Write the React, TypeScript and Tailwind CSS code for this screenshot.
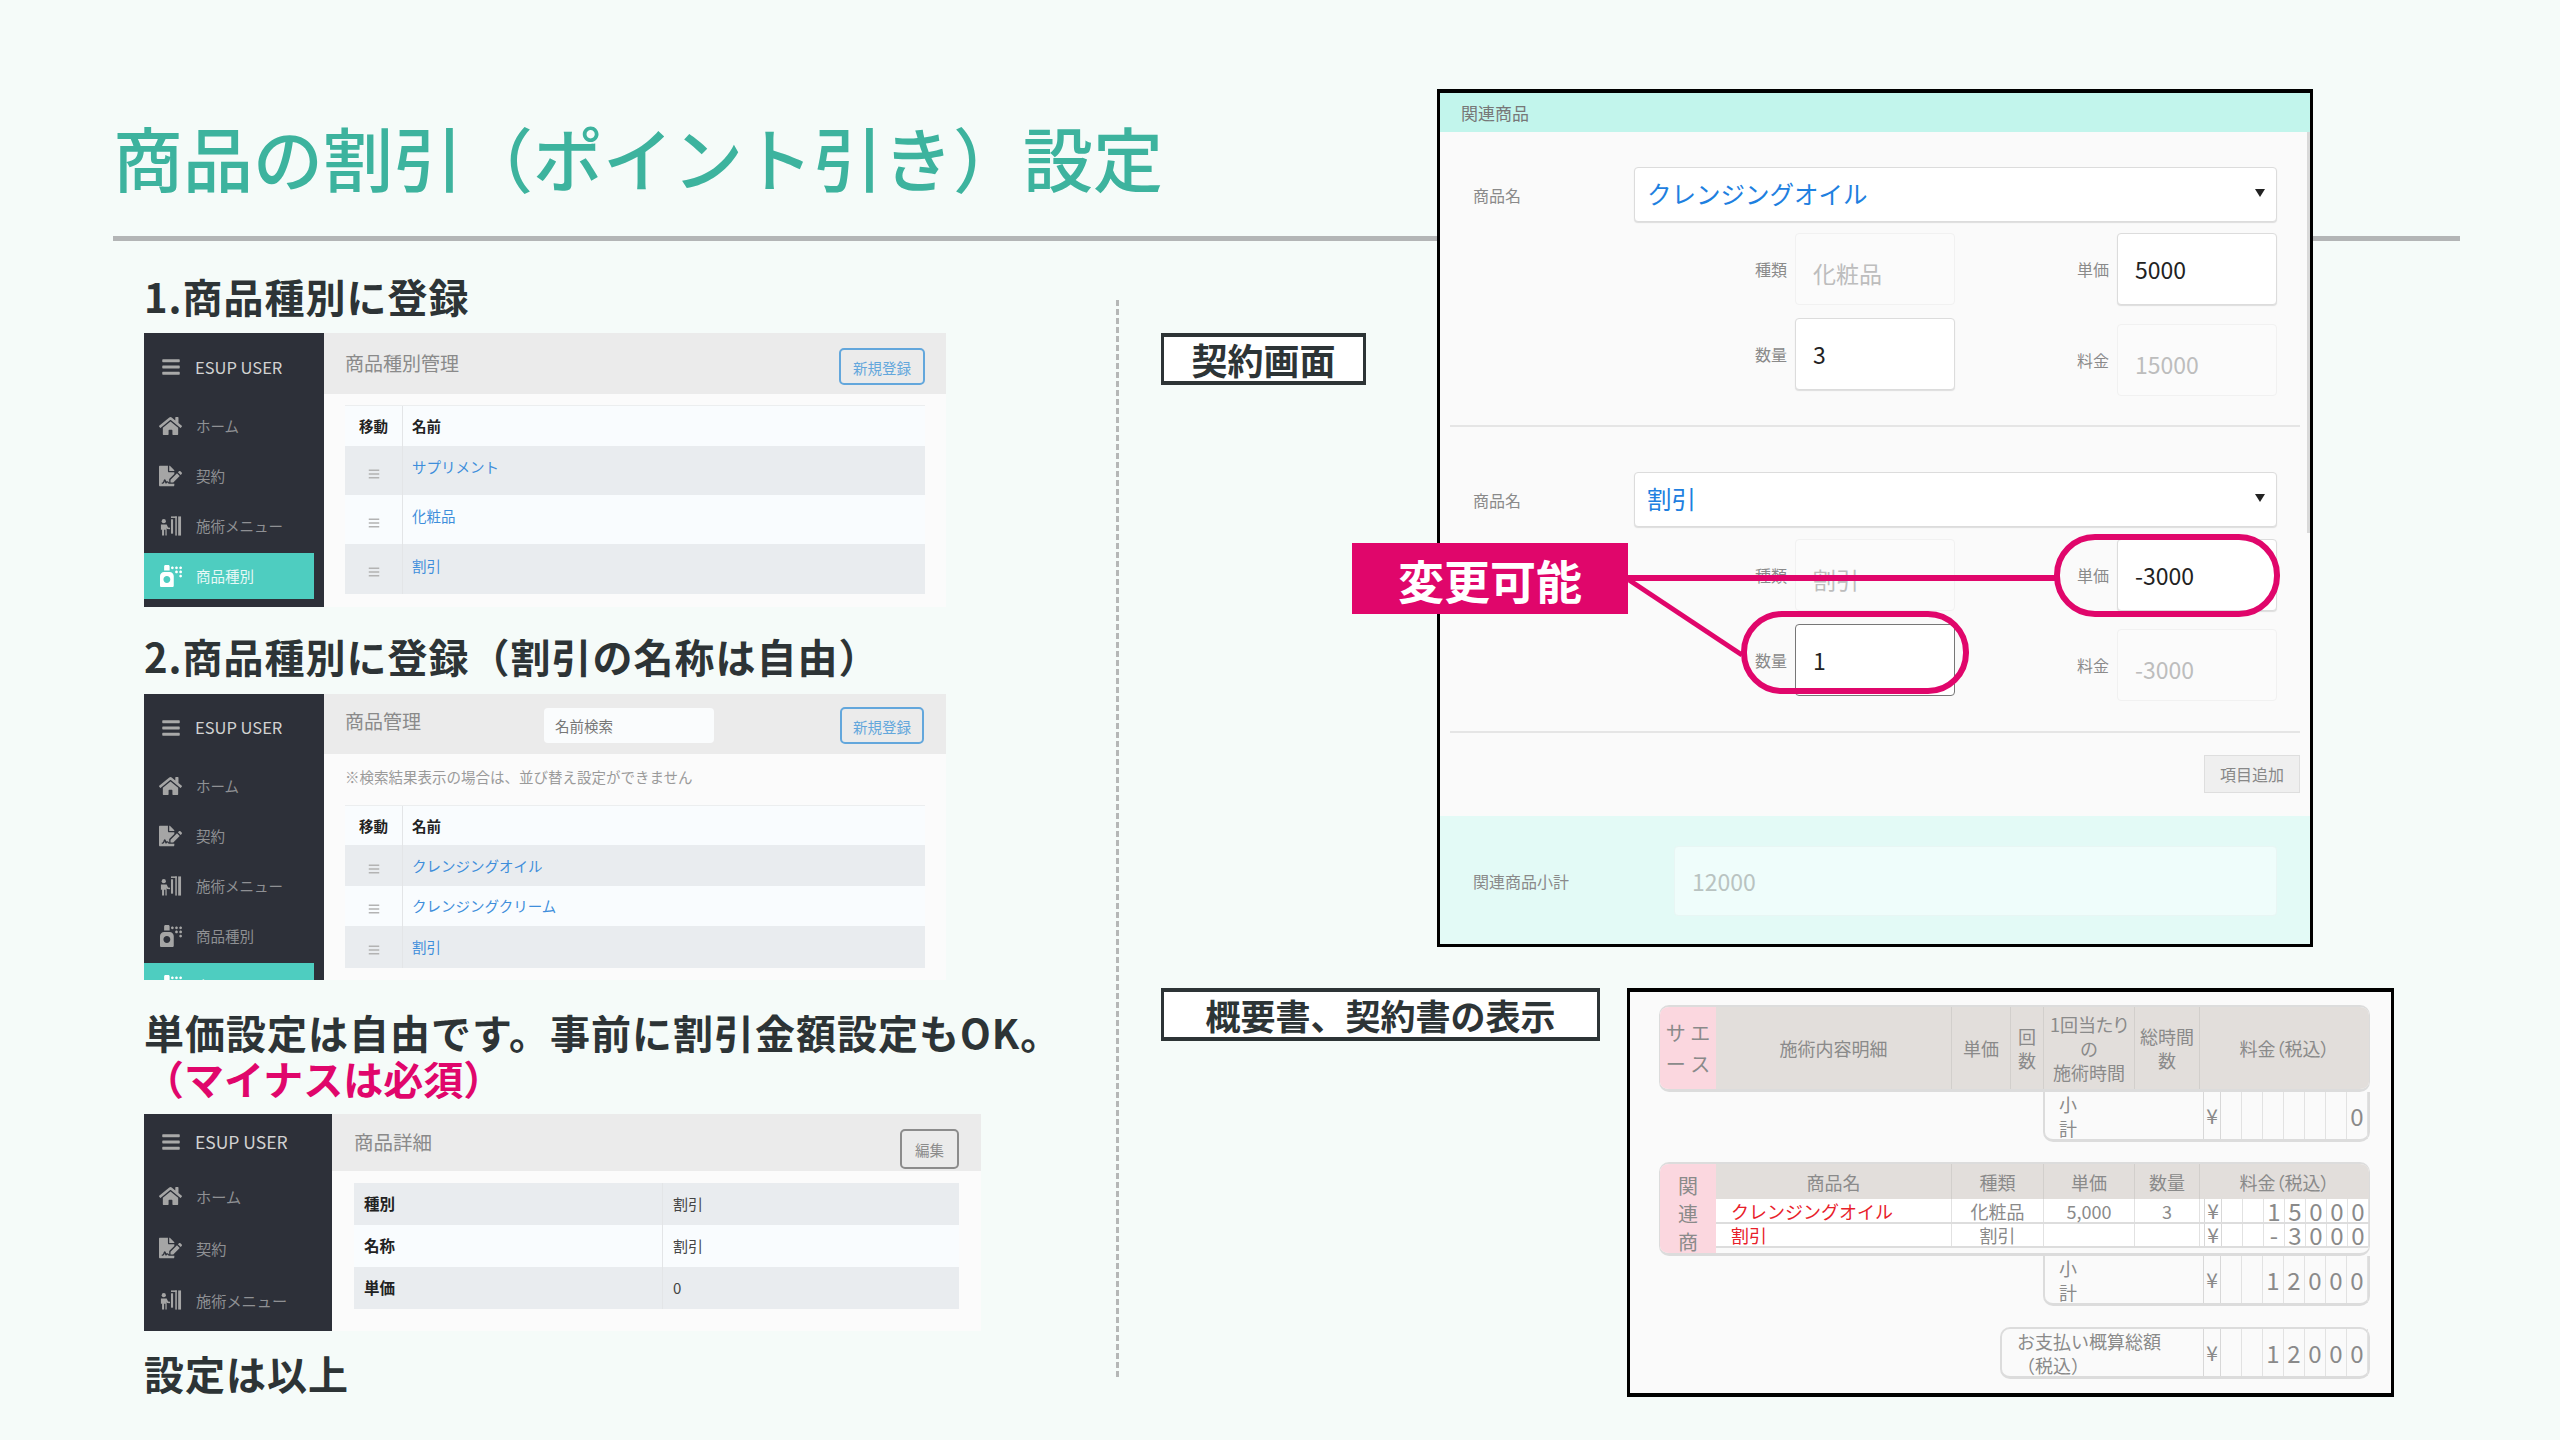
import React from "react";
import { FaHome, FaFileSignature, FaSprayCan, FaBars } from "react-icons/fa";

const MenuIcon = ({ className }: { className?: string }) => (
  <svg viewBox="0 0 24 24" className={className} fill="currentColor">
    <circle cx="5" cy="7" r="2.2" />
    <path d="M2 10.5h6l1.5 3 2 .2v1.6l-3-.2-.5-.9V22H6.7v-6H5.3v6H3.2v-6.5L2 16.5z" />
    <rect x="12.5" y="5" width="2.2" height="15" />
    <rect x="17" y="2" width="1.6" height="20" />
    <rect x="20" y="2" width="3" height="20" />
    <rect x="12.5" y="2" width="6" height="1.6" />
  </svg>
);

type SideProps = {
  width: string;
  activeInner: string;
  headCls: string;
  itemCls: string;
  textCls: string;
  brandCls: string;
  items: { label: string; icon: React.ReactNode; active?: boolean }[];
};

const Sidebar = ({ width, headCls, itemCls, textCls, brandCls, activeInner, items }: SideProps) => (
  <div className={`${width} shrink-0 bg-[#2d3039] overflow-hidden`}>
    <div className={`${headCls} flex items-center pl-[17px] gap-[14px]`}>
      <FaBars className="w-[20px] h-[20px] text-[#a9a9a9]" />
      <span className={`${brandCls} text-[#d2d2d2]`}>ESUP USER</span>
    </div>
    {items.map((it) => (
      <div key={it.label} className={`${itemCls} flex items-center`}>
        <div
          className={
            it.active
              ? `${activeInner} flex items-center bg-[#4ecdc0] pl-[15px] gap-[14px] h-[46px] text-white`
              : "flex items-center pl-[15px] gap-[14px] text-[#a5a5a5]"
          }
        >
          <span className="w-[23px] h-[23px] flex items-center justify-center shrink-0">{it.icon}</span>
          <span className={`${textCls} ${it.active ? "text-[#e8f8f6]" : "text-[#8f9094]"}`}>{it.label}</span>
        </div>
      </div>
    ))}
  </div>
);

const nav = (active: boolean) => [
  { label: "ホーム", icon: <FaHome className="w-[24px] h-[24px]" /> },
  { label: "契約", icon: <FaFileSignature className="w-[24px] h-[24px]" /> },
  { label: "施術メニュー", icon: <MenuIcon className="w-[24px] h-[24px]" /> },
  { label: "商品種別", icon: <FaSprayCan className="w-[22px] h-[22px]" />, active },
];

const OutlineBtn = ({ children, cls }: { children: React.ReactNode; cls: string }) => (
  <div className={`${cls} flex items-center justify-center rounded-[5px] border-2 text-[14.5px] leading-none pt-[3px]`}>
    {children}
  </div>
);

const Row = ({ name, odd, h, up }: { name: string; odd: boolean; h: string; up: string }) => (
  <div className={`flex ${h} ${odd ? "bg-[#e9ecef]" : "bg-[#f9fcfe]"}`}>
    <div className="w-[58px] shrink-0 flex items-center justify-center border-r border-[#e3e5e7] pt-[6px]">
      <FaBars className="w-[12px] h-[12px] text-[#b3b3b3]" />
    </div>
    <div className={`flex items-center pl-[9px] text-[14.5px] text-[#3e8edb] ${up}`}>{name}</div>
  </div>
);

const TableHead = ({ h }: { h: string }) => (
  <div className={`flex ${h} bg-[#f9fcfe] text-[14.5px] font-bold text-[#222] border-t border-[#eceeef]`}>
    <div className="w-[58px] shrink-0 flex items-center justify-center border-r border-[#e3e5e7]">移動</div>
    <div className="flex items-center pl-[9px]">名前</div>
  </div>
);

const Heading = ({ children, cls }: { children: React.ReactNode; cls: string }) => (
  <div className={`${cls} h-[48px] flex items-center text-[40px] leading-none font-bold tracking-[1px] text-[#2d3436]`}>
    {children}
  </div>
);

const ShotOne = () => (
  <div className="flex w-[802px] h-[274px] mt-[13px]">
    <Sidebar
      width="w-[180px]"
      headCls="h-[68px]"
      itemCls="h-[50px]"
      activeInner="w-[170px]"
      textCls="text-[14.5px]"
      brandCls="text-[16.5px]"
      items={nav(true)}
    />
    <div className="flex-1 bg-[#fbfbfb]">
      <div className="h-[61px] bg-[#ebebeb] flex items-center justify-between pl-[21px] pr-[21px]">
        <span className="text-[19px] text-[#8a8a8a]">商品種別管理</span>
        <OutlineBtn cls="w-[86px] h-[37px] mt-[6px] border-[#63a7dc] text-[#63a7dc]">新規登録</OutlineBtn>
      </div>
      <div className="mx-[21px] mt-[11px]">
        <TableHead h="h-[41px]" />
        <Row name="サプリメント" odd h="h-[49px]" up="pb-[7px]" />
        <Row name="化粧品" odd={false} h="h-[49px]" up="pb-[7px]" />
        <Row name="割引" odd h="h-[50px]" up="pb-[7px]" />
      </div>
    </div>
  </div>
);

const ShotTwo = () => (
  <div className="flex w-[802px] h-[286px] mt-[14px] overflow-hidden">
    <Sidebar
      width="w-[180px]"
      headCls="h-[67px]"
      itemCls="h-[50px]"
      activeInner="w-[170px]"
      textCls="text-[14.5px]"
      brandCls="text-[16.5px]"
      items={[
        ...nav(false),
        { label: "商品", icon: <FaSprayCan className="w-[22px] h-[22px]" />, active: true },
      ]}
    />
    <div className="flex-1 bg-[#fbfbfb]">
      <div className="h-[60px] bg-[#ebebeb] flex items-center pl-[21px] pr-[22px]">
        <span className="w-[199px] text-[19px] text-[#8a8a8a] pb-[6px]">商品管理</span>
        <div className="w-[170px] h-[35px] mt-[3px] bg-[#fafcfd] rounded-[4px] flex items-center pl-[11px] text-[14.5px] text-[#777]">
          名前検索
        </div>
        <OutlineBtn cls="ml-auto w-[84px] h-[37px] mt-[3px] border-[#63a7dc] text-[#63a7dc]">新規登録</OutlineBtn>
      </div>
      <div className="pl-[21px] h-[46px] flex items-center text-[14.5px] text-[#9a9a9a]">
        ※検索結果表示の場合は、並び替え設定ができません
      </div>
      <div className="mx-[21px] mt-[5px]">
        <TableHead h="h-[40px]" />
        <Row name="クレンジングオイル" odd h="h-[41px]" up="" />
        <Row name="クレンジングクリーム" odd={false} h="h-[40px]" up="" />
        <Row name="割引" odd h="h-[42px]" up="" />
      </div>
    </div>
  </div>
);

const DetailRow = ({ k, v, odd }: { k: string; v: string; odd: boolean }) => (
  <div className={`flex h-[42px] ${odd ? "bg-[#e9ecef]" : "bg-[#f9fcfe]"}`}>
    <div className="w-[309px] flex items-center pl-[10px] font-bold text-[15.5px] text-[#222] border-r border-[#e3e5e7]">{k}</div>
    <div className="flex items-center pl-[10px] text-[15px] text-[#444]">{v}</div>
  </div>
);

const ShotThree = () => (
  <div className="flex w-[837px] h-[217px] mt-[14px] overflow-hidden">
    <Sidebar
      width="w-[188px]"
      headCls="h-[56px]"
      itemCls="h-[52px] first-of-type:mt-[9px]"
      activeInner="w-[170px]"
      textCls="text-[15.2px]"
      brandCls="text-[17.5px]"
      items={nav(false).slice(0, 3)}
    />
    <div className="flex-1 bg-[#fbfbfb]">
      <div className="h-[57px] bg-[#ebebeb] flex items-center justify-between pl-[22px] pr-[22px]">
        <span className="text-[19.5px] text-[#8a8a8a] pb-[2px]">商品詳細</span>
        <OutlineBtn cls="w-[59px] h-[40px] mt-[12px] border-[#8c8c8c] text-[#8c8c8c]">編集</OutlineBtn>
      </div>
      <div className="mx-[22px] mt-[12px]">
        <DetailRow k="種別" v="割引" odd />
        <DetailRow k="名称" v="割引" odd={false} />
        <DetailRow k="単価" v="0" odd />
      </div>
    </div>
  </div>
);

const Field = ({
  label,
  value,
  editable,
  focused,
  cls,
}: {
  label: string;
  value: string;
  editable?: boolean;
  focused?: boolean;
  cls: string;
}) => (
  <div className={`flex items-center gap-[8px] ${cls}`}>
    <span className="w-[32px] text-[16px] leading-none text-[#8a8a8a] whitespace-nowrap">{label}</span>
    <div
      className={`w-[160px] h-[72px] rounded-[4px] flex items-center pl-[17px] text-[23px] border ${
        editable
          ? `bg-white text-[#222] ${focused ? "border-[#777]" : "border-[#dcdcdc] shadow-[0_1px_1px_#ddd]"}`
          : "bg-[#fbfbfb] text-[#bdbdbd] border-[#f1f1f1] pt-[8px]"
      }`}
    >
      {value}
    </div>
  </div>
);

const SelectRow = ({ value, cls }: { value: string; cls: string }) => (
  <div className={`flex items-center pl-[33px] pr-[33px] ${cls}`}>
    <span className="w-[161px] text-[16px] text-[#8a8a8a]">商品名</span>
    <div className="flex-1 h-[55px] bg-white rounded-[4px] border border-[#dcdcdc] shadow-[0_1px_1px_#ddd] flex items-center justify-between pl-[12px] pr-[11px]">
      <span className="text-[24.5px] text-[#1e80e0]">{value}</span>
      <svg viewBox="0 0 10 8" className="w-[10px] h-[8px] mb-[3px]" fill="#222">
        <polygon points="0,0 10,0 5,8" />
      </svg>
    </div>
  </div>
);

const Separator = ({ cls }: { cls: string }) => <div className={`${cls} mx-[10px] h-[2px] bg-[#e5e5e5]`} />;

const ContractPanel = () => (
  <div className="relative w-[876px] h-[858px] shrink-0">
    <div className="relative w-full h-full border-[3px] border-black border-t-[4px] bg-[#fafafa] overflow-hidden">
      <div className="h-[39px] bg-[#c2f5ec] flex items-center pl-[21px] text-[17px] text-[#777]">関連商品</div>
      <div className="absolute right-0 top-[39px] w-[3px] h-[401px] bg-[#d9d9d9]" />
      <SelectRow value="クレンジングオイル" cls="pt-[35px]" />
      <div className="flex justify-end gap-[122px] pr-[33px] mt-[11px]">
        <Field label="種類" value="化粧品" cls="" />
        <Field label="単価" value="5000" editable cls="" />
      </div>
      <div className="flex justify-end gap-[122px] pr-[33px] mt-[13px] h-[78px]">
        <Field label="数量" value="3" editable cls="self-start" />
        <Field label="料金" value="15000" cls="self-end" />
      </div>
      <Separator cls="mt-[29px]" />
      <SelectRow value="割引" cls="mt-[45px]" />
      <div className="flex justify-end gap-[122px] pr-[33px] mt-[12px]">
        <Field label="種類" value="割引" cls="" />
        <Field label="単価" value="-3000" editable cls="" />
      </div>
      <div className="flex justify-end gap-[122px] pr-[33px] mt-[13px] h-[77px]">
        <Field label="数量" value="1" editable focused cls="self-start" />
        <Field label="料金" value="-3000" cls="self-end" />
      </div>
      <Separator cls="mt-[30px]" />
      <div className="flex justify-end mr-[10px] mt-[22px] h-[61px]">
        <div className="w-[96px] h-[38px] bg-[#efefef] border border-[#dedede] flex items-center justify-center text-[16px] text-[#888]">
          項目追加
        </div>
      </div>
      <div className="h-[130px] bg-[#e3faf6] flex items-center pl-[33px] pr-[33px]">
        <span className="w-[201px] text-[16px] text-[#8a8a8a]">関連商品小計</span>
        <div className="flex-1 h-[70px] bg-[#effdfb] border border-[#e8f6f4] rounded-[4px] flex items-center pl-[17px] text-[23px] text-[#b9c3c1]">
          12000
        </div>
      </div>
    </div>
    <svg className="absolute left-0 top-0 w-full h-full overflow-visible pointer-events-none" fill="none" stroke="#e0066b">
      <line x1="191" y1="489" x2="620" y2="489" strokeWidth="6" />
      <line x1="192" y1="491" x2="305" y2="566" strokeWidth="5" />
      <rect x="620" y="448" width="220" height="77" rx="38" strokeWidth="6" />
      <rect x="307" y="525" width="222" height="77" rx="38" strokeWidth="6" />
    </svg>
    <div className="absolute left-[-85px] top-[454px] w-[276px] h-[71px] bg-[#e0066b] flex items-center justify-center text-white text-[46px] leading-none font-bold">
      変更可能
    </div>
  </div>
);

const LabelBox = ({ children, cls }: { children: React.ReactNode; cls: string }) => (
  <div className={`${cls} shrink-0 bg-white border-[3px] border-t-[4px] border-b-[4px] border-[#2d3436] flex items-center justify-center font-bold leading-none text-[#2d3436]`}>
    {children}
  </div>
);

const Digits = ({ cells, big }: { cells: string[]; big?: boolean }) => (
  <div className="flex h-full pl-[4px] text-[#8a8a8a]">
    <div className="w-[18px] flex items-center justify-center text-[21px] border-x border-[#d8d8d8]">¥</div>
    {cells.map((c, i) => (
      <div
        key={i}
        className={`w-[21px] flex items-center justify-center border-r border-[#e2e2e2] ${big ? "text-[24px]" : "text-[22px]"}`}
      >
        {c}
      </div>
    ))}
  </div>
);

const HeadCell = ({ w, children }: { w: string; children: React.ReactNode }) => (
  <div className={`${w} h-full flex items-center justify-center text-center text-[18px] leading-[24px] text-[#8a8a8a] border-r border-[#d2cfcc] [font-feature-settings:'palt'] last:border-r-0`}>
    <span>{children}</span>
  </div>
);

const BodyCell = ({ w, children, red }: { w: string; children?: React.ReactNode; red?: boolean }) => (
  <div
    className={`${w} flex items-center text-[18px] leading-none ${
      red ? "justify-start pl-[15px] text-[#e8202a]" : "justify-center text-[#8a8a8a]"
    } border-r border-[#e2e2e2]`}
  >
    {children}
  </div>
);

const Sub = () => (
  <div className="w-[327px] h-[50px] ml-auto flex border-x-2 border-b-[3px] border-[#dcdcdc] rounded-b-[10px]">
    <div className="w-[154px] pl-[14px] text-[18px] leading-[24px] text-[#8a8a8a] flex items-center">
      <span>小<br />計</span>
    </div>
  </div>
);

const SubTotal = ({ cells }: { cells: string[] }) => (
  <div className="w-[327px] h-[50px] ml-auto flex border-x-2 border-b-[3px] border-[#dcdcdc] rounded-b-[10px] bg-[#fafafa]">
    <div className="w-[154px] pl-[14px] text-[18px] leading-[24px] text-[#8a8a8a] flex items-center">
      <span>小<br />計</span>
    </div>
    <Digits cells={cells} big />
  </div>
);

const SummaryPanel = () => (
  <div className="w-[767px] h-[409px] shrink-0 border-[3px] border-t-[4px] border-b-[4px] border-black bg-[#fafafa] pt-[13px] pl-[29px] pr-[21px]">
    <div className="flex h-[87px] rounded-[10px] overflow-hidden border-t-2 border-b-[3px] border-x border-[#dcdcdc]">
      <div className="w-[56px] shrink-0 bg-[#fbd7df] flex items-center justify-center text-center text-[20px] leading-[31px] text-[#8a8a8a]">
        <span>サ エ<br />ー ス</span>
      </div>
      <div className="flex-1 flex items-center bg-[#e2dedb]">
        <HeadCell w="w-[236px]">施術内容明細</HeadCell>
        <HeadCell w="w-[59px]">単価</HeadCell>
        <HeadCell w="w-[33px]">回<br />数</HeadCell>
        <HeadCell w="w-[91px]">1回当たり<br />の<br />施術時間</HeadCell>
        <HeadCell w="w-[65px]">総時間<br />数</HeadCell>
        <HeadCell w="flex-1">料金（税込）</HeadCell>
      </div>
    </div>
    <SubTotal cells={["", "", "", "", "", "", "0"]} />
    <div className="flex h-[94px] mt-[20px] rounded-[10px] overflow-hidden border-t-2 border-b-[3px] border-x border-[#dcdcdc]">
      <div className="w-[56px] shrink-0 bg-[#fbd7df] flex justify-center text-[20px] leading-[28px] pt-[8px] text-[#8a8a8a] text-center">
        <span>関<br />連<br />商</span>
      </div>
      <div className="flex-1 flex flex-col">
        <div className="h-[35px] flex items-center bg-[#e2dedb]">
          <HeadCell w="w-[236px]">商品名</HeadCell>
          <HeadCell w="w-[92px]">種類</HeadCell>
          <HeadCell w="w-[91px]">単価</HeadCell>
          <HeadCell w="w-[65px]">数量</HeadCell>
          <HeadCell w="flex-1">料金（税込）</HeadCell>
        </div>
        <div className="h-[25px] flex bg-white border-b-2 border-[#dddddd]">
          <BodyCell w="w-[236px]" red>クレンジングオイル</BodyCell>
          <BodyCell w="w-[92px]">化粧品</BodyCell>
          <BodyCell w="w-[91px]">5,000</BodyCell>
          <BodyCell w="w-[65px]">3</BodyCell>
          <Digits cells={["", "", "1", "5", "0", "0", "0"]} big />
        </div>
        <div className="h-[24px] flex bg-white border-b-2 border-[#dddddd]">
          <BodyCell w="w-[236px]" red>割引</BodyCell>
          <BodyCell w="w-[92px]">割引</BodyCell>
          <BodyCell w="w-[91px]" />
          <BodyCell w="w-[65px]" />
          <Digits cells={["", "", "-", "3", "0", "0", "0"]} big />
        </div>
      </div>
    </div>
    <SubTotal cells={["", "", "1", "2", "0", "0", "0"]} />
    <div className="w-[370px] h-[52px] mt-[21px] ml-auto flex rounded-[10px] border-2 border-b-[3px] border-[#dcdcdc]">
      <div className="w-[197px] text-[18px] leading-[24px] text-[#8a8a8a] pl-[15px] flex items-center">
        <span>お支払い概算総額<br />（税込）</span>
      </div>
      <Digits cells={["", "", "1", "2", "0", "0", "0"]} big />
    </div>
  </div>
);

export default function App() {
  return (
    <div className="w-[2560px] h-[1440px] overflow-hidden bg-[#f5fbf9] font-['Noto_Sans_CJK_JP','Noto_Sans',sans-serif]">
      <div className="h-[241px] pl-[113px] pr-[100px] flex flex-col">
        <div className="h-[236px] pt-[108px] text-[70px] leading-[98px] font-medium text-[#3db39e] whitespace-nowrap">
          商品の割引（ポイント引き）設定
        </div>
        <div className="h-[5px] bg-[#b3b5b6]" />
      </div>
      <div className="flex">
        <div className="w-[1116px] pl-[144px] pt-[31px] shrink-0">
          <Heading cls="">1.商品種別に登録</Heading>
          <ShotOne />
          <Heading cls="mt-[25px]">2.商品種別に登録（割引の名称は自由）</Heading>
          <ShotTwo />
          <Heading cls="mt-[28px]">単価設定は自由です。事前に割引金額設定もOK。</Heading>
          <div className="h-[44px] flex items-center text-[40px] leading-none font-bold text-[#e0066b]">（マイナスは必須）</div>
          <ShotThree />
          <Heading cls="mt-[18px]">設定は以上</Heading>
        </div>
        <div className="w-[3px] h-[1077px] mt-[59px] shrink-0 border-l-[3px] border-dashed border-[#b5b7b7]" />
        <div className="ml-[42px] relative -mt-[152px] flex flex-col">
          <div className="flex">
            <LabelBox cls="w-[205px] h-[52px] mt-[244px] ml-0 text-[36px]">契約画面</LabelBox>
            <div className="ml-[71px]">
              <ContractPanel />
            </div>
          </div>
          <div className="flex mt-[41px]">
            <LabelBox cls="w-[439px] h-[53px] text-[35px]">概要書、契約書の表示</LabelBox>
            <div className="ml-[27px]">
              <SummaryPanel />
            </div>
          </div>
        </div>
      </div>
    </div>
  );
}
